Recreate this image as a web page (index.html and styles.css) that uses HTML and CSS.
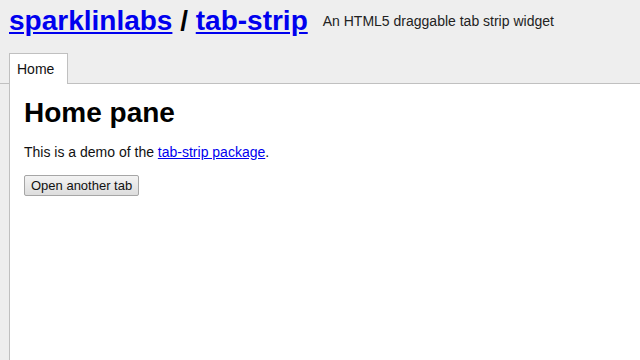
FILE: index.html
```html
<!DOCTYPE html>
<html lang="en">
<head>
  <meta charset="UTF-8">
  <title>tab-strip demo</title>
  <link rel="stylesheet" href="styles.css">
</head>
<body>
  <header class="header">
    <h1 class="title"><a href="#">sparklinlabs</a> / <a href="#">tab-strip</a></h1>
    <span class="tagline">An HTML5 draggable tab strip widget</span>
  </header>
  <div class="tab-strip">
    <div class="tab active">Home</div>
  </div>
  <div class="pane">
    <h1 class="pane-title">Home pane</h1>
    <p class="pane-text">This is a demo of the <a href="#">tab-strip package</a>.</p>
    <button class="open-btn">Open another tab</button>
  </div>
</body>
</html>
```

FILE: styles.css
```css
html, body {
  height: 100%;
}
body {
  font-family: "Liberation Sans", Arial, sans-serif;
  background-color: #eeeeee;
  margin: 0;
  padding: 0;
  display: flex;
  flex-direction: column;
}
a {
  color: #0000ee;
}
.header {
  display: flex;
  align-items: flex-start;
  padding: 5px 9px 0;
  height: 53px;
  box-sizing: border-box;
  flex-shrink: 0;
}
.title {
  margin: 0;
  font-size: 28px;
  line-height: 32px;
  color: #000;
}
.tagline {
  margin-left: 15px;
  margin-top: 8px;
  font-size: 14px;
  line-height: 16px;
  color: #222;
}
.tab-strip {
  display: flex;
  padding-left: 9px;
  border-bottom: 1px solid #c0c0c0;
}
.tab {
  height: 30px;
  line-height: 30px;
  padding: 0 13px 0 7px;
  width: 37px;
  font-size: 14px;
  color: #111;
  border: 1px solid #c0c0c0;
  border-bottom: none;
  background-color: #fff;
  margin-bottom: -1px;
}
.pane {
  flex: 1;
  background-color: #fff;
  margin-left: 9px;
  border-left: 1px solid #c0c0c0;
  padding: 13px 14px;
}
.pane-title {
  margin: 0 0 15px;
  font-size: 28px;
  line-height: 32px;
}
.pane-text {
  margin: 0 0 15px;
  font-size: 14px;
  line-height: 16px;
  color: #111;
}
.open-btn {
  font-family: "Liberation Sans", Arial, sans-serif;
  font-size: 13px;
  line-height: 15px;
  padding: 2px 6px;
  color: #111;
  background: linear-gradient(#f3f3f3, #dddddd);
  border: 1px solid #a6a6a6;
  border-radius: 2px;
}
```
